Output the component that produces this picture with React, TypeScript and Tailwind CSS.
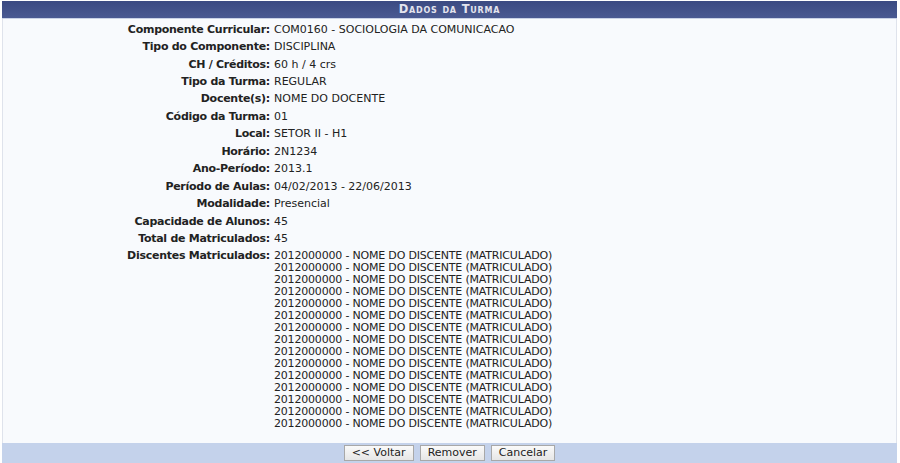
import React from "react";

const rows: [string, string][] = [
  ["Componente Curricular:", "COM0160 - SOCIOLOGIA DA COMUNICACAO"],
  ["Tipo do Componente:", "DISCIPLINA"],
  ["CH / Créditos:", "60 h / 4 crs"],
  ["Tipo da Turma:", "REGULAR"],
  ["Docente(s):", "NOME DO DOCENTE"],
  ["Código da Turma:", "01"],
  ["Local:", "SETOR II - H1"],
  ["Horário:", "2N1234"],
  ["Ano-Período:", "2013.1"],
  ["Período de Aulas:", "04/02/2013 - 22/06/2013"],
  ["Modalidade:", "Presencial"],
  ["Capacidade de Alunos:", "45"],
  ["Total de Matriculados:", "45"],
];

const discentes = Array.from({ length: 15 }, () => "2012000000 - NOME DO DISCENTE (MATRICULADO)");

const btn =
  "h-[16px] px-[7px] border border-[#a8a8a8] bg-gradient-to-b from-[#fafafa] to-[#e6e6e6] text-[11px] leading-[12px] text-[#222] font-['DejaVu_Sans',sans-serif]";

export default function App() {
  return (
    <div className="w-[900px] h-[463px] bg-white font-['DejaVu_Sans','Liberation_Sans',sans-serif] text-[11px] text-[#222] overflow-hidden">
      <div className="ml-[2px] mr-[3px] pt-[1px] flex flex-col h-full">
        <div className="h-[17px] bg-gradient-to-b from-[#3b4a82] to-[#4a5a92] text-[#e4e4ee] font-bold text-center leading-[17px] [font-variant:small-caps] tracking-[0.8px] text-[11.5px]">
          Dados da Turma
        </div>
        <div className="h-px bg-[#c9d2e6]" />
        <div className="flex-1 bg-[#f8fafd] border-x border-[#dfe3ec] flex flex-col pt-[2px] pb-[9px]">
          {rows.map(([k, v]) => (
            <div key={k} className="flex leading-[12px] py-[2.73px]">
              <div className="w-[267px] shrink-0 text-right font-bold tracking-[-0.27px]">{k}</div>
              <div className="pl-[4px]">{v}</div>
            </div>
          ))}
          <div className="flex leading-[12px] py-[2.73px]">
            <div className="w-[267px] shrink-0 text-right font-bold tracking-[-0.27px]">Discentes Matriculados:</div>
            <div className="pl-[4px] flex flex-col tracking-[-0.19px]">
              {discentes.map((d, i) => (
                <div key={i}>{d}</div>
              ))}
            </div>
          </div>
        </div>
        <div className="h-[20px] bg-[#c4d2eb] flex items-center justify-center gap-[6px]">
          <button className={btn}>&lt;&lt; Voltar</button>
          <button className={btn}>Remover</button>
          <button className={btn}>Cancelar</button>
        </div>
      </div>
    </div>
  );
}
